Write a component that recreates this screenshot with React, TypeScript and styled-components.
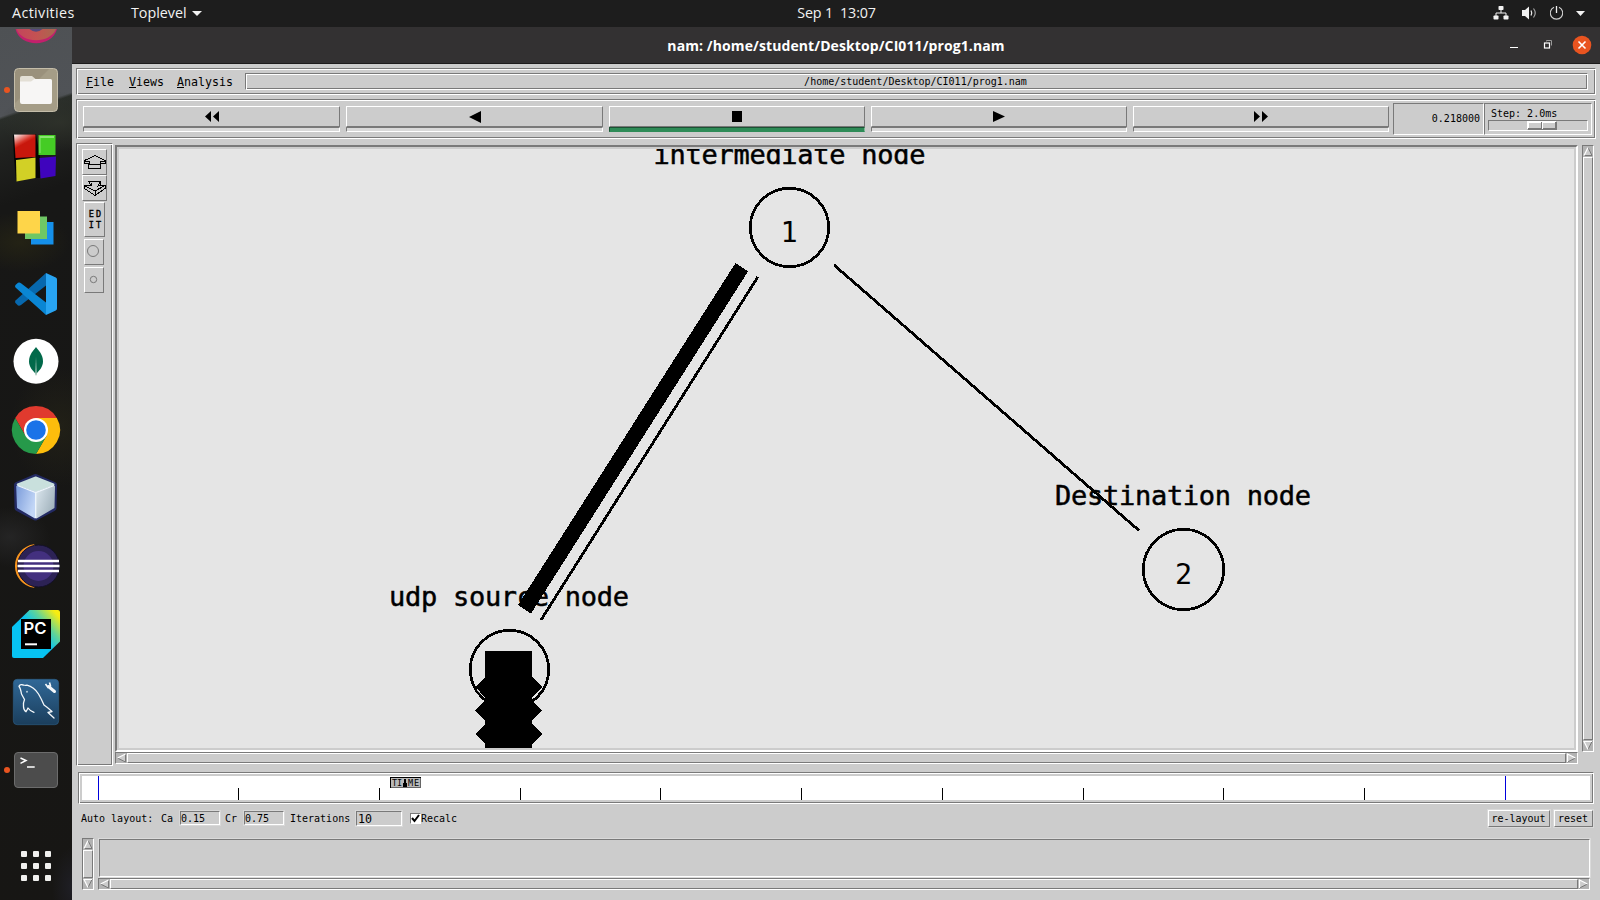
import React from "react";
import styled, { createGlobalStyle, css } from "styled-components";

const GRAY = "#797979";
const FACE = "#cccccc";
const MONO = `"DejaVu Sans Mono", "Liberation Mono", monospace`;
const SANS = `"Open Sans", "Noto Sans", sans-serif`;

const Global = createGlobalStyle`
  *, *::before, *::after { box-sizing: border-box; }
  body { margin: 0; background: #171614; overflow: hidden; }
  svg { display: block; }
`;

const groove = css`
  border: 1px solid;
  border-color: ${GRAY} #fff #fff ${GRAY};
  box-shadow: inset 1px 1px #fff, inset -1px -1px ${GRAY};
`;
const sunken = css`
  border: 1px solid;
  border-color: ${GRAY} #fff #fff ${GRAY};
`;
const raised = css`
  border: 1px solid;
  border-color: #fff ${GRAY} ${GRAY} #fff;
`;

const Screen = styled.div`
  width: 1600px;
  height: 900px;
  display: flex;
  flex-direction: column;
  overflow: hidden;
`;

/* ---------- desktop top bar ---------- */
const TopBar = styled.header`
  height: 27px;
  flex: none;
  background: #1d1d1d;
  color: #f2f2f2;
  font: 14.3px/26px ${SANS};
  display: grid;
  grid-template-columns: 1fr auto 1fr;
  white-space: pre;
`;
const BarLeft = styled.div`
  display: flex;
  padding-left: 12px;
`;
const BarLabel = styled.span<{ $w: number; $ls?: number }>`
  width: ${(p) => p.$w}px;
  letter-spacing: ${(p) => p.$ls ?? 0}px;
`;
const Clock = styled.div`
  padding-left: 73px;
  letter-spacing: -0.15px;
`;
const BarRight = styled.div`
  display: flex;
  justify-content: flex-end;
  align-items: center;
  gap: 13px;
  padding: 0 15px 1px 0;
`;
const CaretSlot = styled.span`
  display: flex;
  align-items: center;
`;

const Body = styled.div`
  flex: 1;
  display: flex;
  min-height: 0;
`;

/* ---------- dock ---------- */
const Dock = styled.nav`
  width: 72px;
  flex: none;
  display: flex;
  flex-direction: column;
  background:
    radial-gradient(60px 30px at 60px 95px, rgba(48, 52, 44, 0.8), transparent),
    radial-gradient(50px 60px at 60px 400px, rgba(40, 38, 24, 0.6), transparent),
    radial-gradient(50px 30px at 20px 215px, rgba(44, 42, 20, 0.6), transparent),
    radial-gradient(40px 30px at 10px 510px, rgba(50, 50, 52, 0.5), transparent),
    radial-gradient(20px 40px at 72px 860px, rgba(34, 34, 44, 0.7), transparent),
    linear-gradient(161deg, #4e5154 0, #505357 85px, #2a2e2a 88px, #20211f 120px, #171716 170px, #171614 100%);
`;
const DockHead = styled.div`
  height: 29px;
`;
const DockSlot = styled.div`
  height: 68px;
`;
const AppsSlot = styled.div`
  height: 96px;
  padding: 47px 0 0 21px;
`;

/* ---------- window ---------- */
const Window = styled.main`
  flex: 1;
  display: flex;
  flex-direction: column;
  background: ${FACE};
  color: #000;
  font: 10px/12px ${MONO};
  white-space: pre;
`;
const TitleBar = styled.div`
  height: 37px;
  flex: none;
  background: #333132;
  border-bottom: 1px solid #1c1b1b;
  display: grid;
  grid-template-columns: 1fr auto 1fr;
  color: #fff;
  font: bold 14px/38px ${SANS};
`;
const Title = styled.div`
  height: 36px;
  letter-spacing: 0.1px;
`;
const WinButtons = styled.div`
  display: flex;
  justify-content: flex-end;
  align-items: center;
  height: 36px;
  padding-right: 8px;
`;
const MenuBar = styled.div`
  ${groove}
  height: 27px;
  margin: 4px 4px 0;
  padding: 4px 7px 4px 9px;
  display: flex;
`;
const MenuItem = styled.span<{ $w: number }>`
  width: ${(p) => p.$w}px;
  font-size: 11.63px;
  line-height: 19px;
`;
const PathField = styled.div`
  ${groove}
  flex: 1;
  height: 17px;
  text-align: center;
  line-height: 16px;
  padding-right: 2px;
`;
const Transport = styled.div`
  ${groove}
  height: 40px;
  margin: 4px 4px 0;
  padding: 3px 3px 3px 6px;
  display: flex;
`;
const Keys = styled.div`
  flex: 1;
  display: flex;
  gap: 6px;
  padding: 3px 4px 0 0;
`;
const Key = styled.div<{ $w: number }>`
  width: ${(p) => p.$w}px;
`;
const KeyFace = styled.div`
  ${raised}
  height: 21px;
  display: flex;
  justify-content: center;
  padding-top: 4px;
`;
const KeyLamp = styled.div<{ $on?: boolean }>`
  height: 5px;
  border: 1px solid;
  background: ${(p) => (p.$on ? "#2e8b57" : "#d9d9d9")};
  border-color: ${(p) => (p.$on ? "#1b5334 #82b99a #2e8b57 #1b5334" : `${GRAY} #fff #fff ${GRAY}`)};
`;
const TimeBox = styled.div`
  ${sunken}
  width: 91px;
  height: 32px;
  line-height: 30px;
  text-align: right;
  padding-right: 3px;
`;
const StepBox = styled.div`
  ${sunken}
  width: 108px;
  height: 32px;
  padding: 4px 3px 0;
`;
const StepLabel = styled.div`
  padding-left: 3px;
  height: 12px;
`;
const StepTrough = styled.div`
  ${sunken}
  width: 100px;
  height: 11px;
  padding-left: 38px;
`;
const StepThumb = styled.div`
  width: 30px;
  height: 9px;
  display: flex;
  border: 1px solid;
  border-color: #fff ${GRAY} ${GRAY} #fff;
  box-shadow: inset -1px -1px ${GRAY}, inset 1px 1px #fff;
`;
const ThumbHalf = styled.span`
  flex: 1;
  & + & {
    border-left: 1px solid #fff;
    box-shadow: -1px 0 ${GRAY};
  }
`;

const Workspace = styled.div`
  display: flex;
  height: 623px;
  margin: 4px 6px 0 4px;
`;
const Toolbox = styled.div`
  ${groove}
  width: 37px;
  padding: 5px 0 0 5px;
`;
const Tool = styled.div<{ $w: number; $h: number; $ml?: number; $mt?: number }>`
  ${raised}
  width: ${(p) => p.$w}px;
  height: ${(p) => p.$h}px;
  margin: ${(p) => p.$mt ?? 0}px 0 0 ${(p) => p.$ml ?? 0}px;
  display: flex;
  align-items: center;
  justify-content: center;
`;
const ToolText = styled.span`
  font: 8.5px/11px ${MONO};
  letter-spacing: 2.1px;
  -webkit-text-stroke: 0.35px #000;
  padding-left: 3px;
`;
const CanvasColumn = styled.div`
  width: 1463px;
  margin: 2px 4px 0 2px;
`;
const CanvasFrame = styled.div`
  height: 607px;
  border: 2px solid;
  border-color: ${GRAY} #fff #fff ${GRAY};
  padding: 2px;
`;
const Diagram = styled.svg`
  background: #e5e5e5;
  overflow: hidden;
  text {
    font-family: ${MONO};
    white-space: pre;
  }
`;

const Bar = styled.div<{ $vertical?: boolean; $length: number; $mt?: number }>`
  ${sunken}
  background: #b3b3b3;
  display: flex;
  flex: none;
  flex-direction: ${(p) => (p.$vertical ? "column" : "row")};
  width: ${(p) => (p.$vertical ? 12 : p.$length)}px;
  height: ${(p) => (p.$vertical ? p.$length : 12)}px;
  margin-top: ${(p) => p.$mt ?? 0}px;
`;
const BarThumb = styled.div`
  ${raised}
  flex: 1;
  background: ${FACE};
`;

const Timeline = styled.div`
  ${groove}
  width: 1516px;
  height: 32px;
  margin: 6px 0 0 6px;
  padding: 3px;
`;
const Controls = styled.div`
  height: 34px;
  display: flex;
  padding: 6px 7px 0 9px;
`;
const Label = styled.span<{ $w: number }>`
  width: ${(p) => p.$w}px;
  line-height: 18px;
`;
const Entry = styled.span<{ $w: number; $mr: number; $big?: boolean }>`
  ${sunken}
  outline: 1px solid #d8d8d8;
  width: ${(p) => p.$w}px;
  height: ${(p) => (p.$big ? 15 : 14)}px;
  margin: 1px ${(p) => p.$mr}px 0 0;
  padding-left: ${(p) => (p.$big ? 1 : 0)}px;
  font-size: ${(p) => (p.$big ? 11.63 : 10)}px;
  line-height: ${(p) => (p.$big ? 14 : 13)}px;
`;
const Check = styled.span`
  width: 11px;
  height: 11px;
  margin-top: 3px;
  background: #fff;
  border: 1px solid;
  border-color: ${GRAY} #fff #fff ${GRAY};
`;
const Push = styled.button<{ $w: number }>`
  appearance: none;
  ${raised}
  border-radius: 0;
  box-shadow: 0 0 0 1px #d9d9d9;
  background: ${FACE};
  width: ${(p) => p.$w}px;
  height: 17px;
  margin: 0 0 0 4px;
  padding: 0 1px 0 0;
  font: 10px/15px ${MONO};
  color: #000;
`;
const Grow = styled.span`
  flex: 1;
`;
const Footer = styled.div`
  display: flex;
  padding-left: 10px;
`;
const LogColumn = styled.div`
  margin-left: 4px;
`;
const LogBox = styled.div`
  ${sunken}
  width: 1491px;
  height: 38px;
  margin: 1px 0 0 1px;
  outline: 1px solid #dadada;
`;

type Dir = "left" | "right" | "up" | "down";
const arrowEdges: Record<Dir, [string, string]> = {
  left: ["M9 1 L1 5", "M1 5 L9 9 L9 1"],
  right: ["M1 9 L1 1 L9 5", "M9 5 L1 9"],
  up: ["M1 9 L5 1", "M5 1 L9 9 L1 9"],
  down: ["M9 1 L1 1 L5 9", "M5 9 L9 1"],
};
const Arrow = ({ dir }: { dir: Dir }) => (
  <svg width={dir === "left" || dir === "right" ? 11 : 10} height={dir === "up" || dir === "down" ? 11 : 10} viewBox="0 0 10 10">
    <path d={`${arrowEdges[dir][0]} ${arrowEdges[dir][1].replace("M", "L")} Z`} fill={FACE} />
    <path d={arrowEdges[dir][1]} fill="none" stroke={GRAY} strokeWidth="1" />
    <path d={arrowEdges[dir][0]} fill="none" stroke="#fff" strokeWidth="1.2" />
  </svg>
);
const Scrollbar = ({ vertical, length, mt }: { vertical?: boolean; length: number; mt?: number }) => (
  <Bar $vertical={vertical} $length={length} $mt={mt}>
    <Arrow dir={vertical ? "up" : "left"} />
    <BarThumb />
    <Arrow dir={vertical ? "down" : "right"} />
  </Bar>
);

const Slot = ({ children, running }: { children: React.ReactNode; running?: boolean }) => (
  <DockSlot>
    <svg width="72" height="68" viewBox="0 0 72 68">
      {running && <circle cx="7" cy="34" r="3" fill="#e95420" />}
      {children}
    </svg>
  </DockSlot>
);

const DockIcons = () => (
  <Dock>
    <DockHead>
      <svg width="72" height="29" viewBox="0 0 72 29">
        <defs>
          <linearGradient id="ring" x1="0" y1="0" x2="1" y2="0">
            <stop offset="0" stopColor="#c2455c" />
            <stop offset="0.5" stopColor="#c45252" />
            <stop offset="1" stopColor="#a8684e" />
          </linearGradient>
        </defs>
        <path d="M15.500 2 C20 21 52 21 57 2 Z" fill="#c2206c" />
        <path d="M16.500 2 C22 17 50 17 56 2 Z" fill="url(#ring)" />
        <path d="M29.500 2 Q36 7.500 42.500 2 Z" fill="#56497c" />
      </svg>
    </DockHead>
    <Slot running>
      <defs>
        <linearGradient id="files" x1="0" y1="0" x2="1" y2="1">
          <stop offset="0.4" stopColor="#9a917c" />
          <stop offset="0.42" stopColor="#a59d87" />
        </linearGradient>
      </defs>
      <rect x="14.500" y="12.500" width="43" height="43" rx="4" fill="url(#files)" stroke="#c4bda9" />
      <path d="M20 23 V22 Q20 20 22 20 H32 L35.500 23 H50 Q52 23 52 25 V30 H20 Z" fill="#e3dfd5" />
      <path d="M20 25.500 H31 L34.500 23 H50 Q52 23 52 25 V46 Q52 48 50 48 H22 Q20 48 20 46 Z" fill="#f7f6f5" />
    </Slot>
    <Slot>
      <defs>
        <linearGradient id="red" x1="0" y1="0" x2="0.5" y2="1">
          <stop offset="0" stopColor="#fff" />
          <stop offset="0.4" stopColor="#d8362a" />
          <stop offset="0.5" stopColor="#c8170c" />
        </linearGradient>
      </defs>
      <path d="M13 12 L14 10 L36 10 L40 33 L40 54 L36 54 L16 57 L14 34 Z" fill="#050505" />
      <path d="M14 10.500 H35.500 V33 L15.500 34 Z" fill="url(#red)" />
      <path d="M38.500 11 H55.500 V31 H38.500 Z" fill="#45cc25" />
      <path d="M39.500 12 H54 V14 H40.500 V29 H39.500 Z" fill="#8ae572" />
      <path d="M16 36 L35.500 33.500 V54 L16.500 57.500 Z" fill="#d2d026" />
      <path d="M39.500 34 L56 32.500 L55.500 52 L40.500 54.500 Z" fill="#3f04bd" />
    </Slot>
    <Slot>
      <rect x="31" y="30" width="22.500" height="22.500" fill="#1590ea" />
      <rect x="25" y="24.500" width="22" height="22.500" fill="#6fc765" />
      <rect x="17.500" y="19" width="22.500" height="22.500" fill="#fed549" />
    </Slot>
    <Slot>
      <path d="M46 13 L15.500 40.500 Q14.500 42 15.500 43 L18 45.500 Q19.500 46 21 45 L46 25.500 Z" fill="#0768ae" />
      <path d="M46 55 L15.500 27.500 Q14.500 26 15.500 25 L18 22.800 Q19.500 22 21 23.200 L46 42.500 Z" fill="#0a86d4" />
      <path d="M46 13 L55.800 17.500 Q57 18 57 19.500 V48.500 Q57 50 55.800 50.500 L46 55 Z" fill="#28a4f2" />
    </Slot>
    <Slot>
      <circle cx="36" cy="33.300" r="22.500" fill="#fff" />
      <path d="M36 19 C38 22 43 26 43 33.500 C43 39 39 43 36.500 45.500 L36 47.500 L35.500 45.500 C33 43 29 39 29 33.500 C29 26 34 22 36 19 Z" fill="#01694a" />
      <path d="M36 29 L36.700 46 L36 48 L35.300 46 Z" fill="#b7cfc4" />
    </Slot>
    <Slot>
      <path d="M15.200 22 A24 24 0 0 1 56.800 22 L36 22 L25.600 40 Z" fill="#e03a2e" />
      <path d="M56.800 22 A24 24 0 0 1 36 58 L46.400 40 L36 22 Z" fill="#fdbd0c" />
      <path d="M36 58 A24 24 0 0 1 15.200 22 L25.600 40 L46.400 40 Z" fill="#26994a" />
      <circle cx="36" cy="34" r="12" fill="#fff" />
      <circle cx="36" cy="34" r="9.800" fill="#1a73e8" />
    </Slot>
    <Slot>
      <defs>
        <linearGradient id="cubeL" x1="0" y1="0" x2="1" y2="0.5">
          <stop offset="0" stopColor="#7f9fdc" />
          <stop offset="1" stopColor="#c2d6f6" />
        </linearGradient>
        <linearGradient id="cubeR" x1="0" y1="0" x2="1" y2="0.6">
          <stop offset="0" stopColor="#dbe6ee" />
          <stop offset="1" stopColor="#a3b4be" />
        </linearGradient>
      </defs>
      <path d="M35.500 13 L54 21 L53.500 44 L35.500 53.500 L17.500 44 L17 21 Z" fill="#232a63" stroke="#232a63" strokeWidth="6" strokeLinejoin="round" />
      <g strokeLinejoin="round" strokeWidth="2">
        <path d="M35.700 13.500 L53.500 20.500 L35.700 27 L17.700 20.500 Z" fill="#c9e0dd" stroke="#c9e0dd" />
        <path d="M17.200 22.500 L35 28.500 V53.500 L18 43.500 Z" fill="url(#cubeL)" stroke="url(#cubeL)" />
        <path d="M54 22.500 L36.500 28.500 V53.500 L53.500 43.500 Z" fill="url(#cubeR)" stroke="url(#cubeR)" />
      </g>
      <path d="M17.500 21.500 L35.700 28.500 L54 21.500 M35.700 28.500 V54" fill="none" stroke="#eef5fb" strokeWidth="1.300" />
    </Slot>
    <Slot>
      <path d="M34 12.200 A22 22 0 0 0 34 55.800 L38 50 V18 Z" fill="#f7941e" />
      <circle cx="38.500" cy="34" r="21" fill="#2c2255" stroke="#131029" strokeWidth="1" />
      <circle cx="38.500" cy="34" r="15" fill="#43307f" />
      <path d="M18 29 H59 M17.500 34 H59.500 M18 39 H59" stroke="#fff" strokeWidth="2.400" />
    </Slot>
    <Slot>
      <defs>
        <linearGradient id="pc" gradientUnits="userSpaceOnUse" x1="26" y1="40" x2="58" y2="12">
          <stop offset="0.300" stopColor="#07c3f2" />
          <stop offset="0.600" stopColor="#5fd39a" />
          <stop offset="0.950" stopColor="#f8ed11" />
        </linearGradient>
      </defs>
      <path d="M29.500 10 H58 Q60 10 60 12 V41.500 L43 58 H14 Q12 58 12 56 V27 Z" fill="url(#pc)" />
      <rect x="21" y="19" width="30" height="30" fill="#000" />
      <text x="23.500" y="34" fontFamily="Inter, sans-serif" fontWeight="600" fontSize="16" fill="#fff" textLength="23" lengthAdjust="spacingAndGlyphs">PC</text>
      <rect x="25" y="43.300" width="12" height="2" fill="#fff" />
    </Slot>
    <Slot>
      <defs>
        <linearGradient id="sql" x1="0" y1="0" x2="0" y2="1">
          <stop offset="0" stopColor="#306897" />
          <stop offset="1" stopColor="#1b3e5c" />
        </linearGradient>
      </defs>
      <rect x="13.300" y="11.300" width="45.400" height="45.400" rx="4" fill="url(#sql)" stroke="#2e5f88" strokeWidth="0.600" />
      <g fill="none" stroke="#f4f8fb" strokeWidth="1.300" strokeLinejoin="round" strokeLinecap="round">
        <path d="M26 43.700 Q23.500 42 23.500 38.500 Q23 35 24.500 31.500 L21.500 26 Q20.500 20 19 18.500 Q19.500 16 23.300 17 Q25 17.500 27 17.200 Q34 19 38.500 26 Q41.500 31 44 37 Q47 39 52 43.500 L48 44.500 L54 50 M26 43.700 Q27 42 28 40 Q30 43 34 44.300" />
        <path d="M27 23.500 v0.500" />
      </g>
      <path d="M48.500 18.500 L54.500 23.500" stroke="#f4f8fb" strokeWidth="3" strokeLinecap="round" />
      <path d="M45.500 16 L48 19.500 L50.500 18 L49.500 14.500" stroke="#f4f8fb" strokeWidth="1.600" fill="none" />
    </Slot>
    <Slot running>
      <rect x="14.500" y="16.500" width="43" height="35" rx="3.500" fill="#4c4c4c" stroke="#6c6c6c" />
      <path d="M20.500 22 L26 24.500 L20.500 27.300 M27 31 H34.700" fill="none" stroke="#fff" strokeWidth="1.500" />
    </Slot>
    <AppsSlot>
      <svg width="30" height="30" viewBox="0 0 30 30">
        {[0, 12, 24].flatMap((y) =>
          [0, 12, 24].map((x) => <rect key={`${x}-${y}`} x={x} y={y} width="6" height="6" rx="1" fill="#f0f0ee" />)
        )}
      </svg>
    </AppsSlot>
  </Dock>
);

const keys: { d: string; w: number; keyWidth: number; on?: boolean }[] = [
  { d: "M6 0 V11 L0 5.500 Z M14 0 V11 L8 5.500 Z", w: 14, keyWidth: 257 },
  { d: "M12 0 V12 L0 6 Z", w: 12, keyWidth: 257 },
  { d: "M0 0 H10 V11 H0 Z", w: 10, keyWidth: 256, on: true },
  { d: "M0 0 V11 L12 5.500 Z", w: 12, keyWidth: 256 },
  { d: "M0 0 V11 L6 5.500 Z M8 0 V11 L14 5.500 Z", w: 14, keyWidth: 256 },
];

const ticks = [238, 379, 520, 660, 801, 942, 1083, 1223, 1364];

const App = () => (
  <Screen>
    <Global />
    <TopBar>
      <BarLeft>
        <BarLabel $w={119} $ls={0.38}>Activities</BarLabel>
        <BarLabel $w={61}>Toplevel</BarLabel>
        <CaretSlot>
          <svg width="10" height="5" viewBox="0 0 10 5"><path d="M0 0 H10 L5 5 Z" fill="#f2f2f2" /></svg>
        </CaretSlot>
      </BarLeft>
      <Clock>Sep 1  13:07</Clock>
      <BarRight>
        <svg width="16" height="14" viewBox="0 0 16 14">
          <path d="M8 3 V7 M3 10 V7 H13 V10" fill="none" stroke="#f2f2f2" strokeWidth="1" />
          <rect x="5.500" y="0" width="5" height="4" rx="0.800" fill="#f2f2f2" />
          <rect x="0.500" y="9.500" width="5" height="4" rx="0.800" fill="#f2f2f2" />
          <rect x="10.500" y="9.500" width="5" height="4" rx="0.800" fill="#f2f2f2" />
        </svg>
        <svg width="15" height="14" viewBox="0 0 15 14">
          <path d="M0 4 H3 L7 0.500 V13.500 L3 10 H0 Z" fill="#f2f2f2" />
          <path d="M9 4.500 Q10.500 7 9 9.500" fill="none" stroke="#f2f2f2" strokeWidth="1.200" />
          <path d="M11.500 2.500 Q15 7 11.500 11.500" fill="none" stroke="#a5a5a5" strokeWidth="1.200" />
        </svg>
        <svg width="13" height="14" viewBox="0.500 0 13 14">
          <path d="M4.500 1.300 A6.200 6.200 0 1 0 9.500 1.300" fill="none" stroke="#cfcfcf" strokeWidth="1.200" />
          <path d="M7 0 V7" stroke="#f2f2f2" strokeWidth="1.300" />
        </svg>
        <svg width="9" height="5" viewBox="0 0 9 5"><path d="M0 0 H9 L4.500 5 Z" fill="#f2f2f2" /></svg>
      </BarRight>
    </TopBar>
    <Body>
      <DockIcons />
      <Window>
        <TitleBar>
          <span />
          <Title>nam: /home/student/Desktop/CI011/prog1.nam</Title>
          <WinButtons>
            <svg width="82" height="20" viewBox="0 0 82 20">
              <path d="M0 12.500 H8" stroke="#fff" />
              <path d="M36.500 6.500 V5.500 H41.500 V10.500" fill="none" stroke="#9b9a9a" />
              <rect x="34.500" y="8" width="5" height="5" fill="none" stroke="#fff" strokeWidth="1.200" />
              <circle cx="72" cy="10" r="9.300" fill="#e95420" />
              <path d="M68.500 6.500 L75.500 13.500 M75.500 6.500 L68.500 13.500" stroke="#fff" strokeWidth="1.600" />
            </svg>
          </WinButtons>
        </TitleBar>
        <MenuBar>
          <MenuItem $w={43}><u>F</u>ile</MenuItem>
          <MenuItem $w={48}><u>V</u>iews</MenuItem>
          <MenuItem $w={68}><u>A</u>nalysis</MenuItem>
          <PathField>/home/student/Desktop/CI011/prog1.nam</PathField>
        </MenuBar>
        <Transport>
          <Keys>
            {keys.map((k, i) => (
              <Key key={i} $w={k.keyWidth}>
                <KeyFace>
                  <svg width={k.w} height="12" viewBox={`0 0 ${k.w} 12`}><path d={k.d} /></svg>
                </KeyFace>
                <KeyLamp $on={k.on} />
              </Key>
            ))}
          </Keys>
          <TimeBox>0.218000</TimeBox>
          <StepBox>
            <StepLabel>Step: 2.0ms</StepLabel>
            <StepTrough>
              <StepThumb><ThumbHalf /><ThumbHalf /></StepThumb>
            </StepTrough>
          </StepBox>
        </Transport>
        <Workspace>
          <Toolbox>
            <Tool $w={25} $h={26}>
              <svg width="22" height="14" viewBox="0 0 22 14" fill="none" stroke="#000" shapeRendering="crispEdges">
                <path d="M11 0.500 L21 5.500 V8.500 H16.500 V13.500 H4.500 V8.500 H0.500 V5.500 Z M4.500 9.500 H17 M0.500 6.500 H5.500 M16.500 6.500 H21 M5.500 6 V9 M16.500 6 V9" />
              </svg>
            </Tool>
            <Tool $w={25} $h={26}>
              <svg width="22" height="15" viewBox="0 0 22 15" fill="none" stroke="#000" shapeRendering="crispEdges">
                <path d="M4.500 0.500 H16.500 V4.500 H21 V7.500 L11 14.500 L0.500 7.500 V4.500 H7 L4.500 0.500 M16.500 0.500 L14 5 L21 4.500 M0.500 4.500 L11 10 L21 4.500 M11 10 V14 M7 4.500 V2" />
              </svg>
            </Tool>
            <Tool $w={21} $h={35} $ml={2} $mt={1}><ToolText>{"ED\nIT"}</ToolText></Tool>
            <Tool $w={20} $h={26} $ml={2} $mt={2}>
              <svg width="18" height="18" viewBox="0 0 18 18"><circle cx="8" cy="8" r="5.500" fill="none" stroke={GRAY} /></svg>
            </Tool>
            <Tool $w={20} $h={26} $ml={2} $mt={2}>
              <svg width="18" height="18" viewBox="0 0 18 18"><circle cx="8.500" cy="8.500" r="3.200" fill="none" stroke={GRAY} /></svg>
            </Tool>
          </Toolbox>
          <CanvasColumn>
            <CanvasFrame>
              <Diagram width="1455" height="599" viewBox="119 149 1455 599">
                <g fontSize="27" stroke="#000" strokeWidth="0.500">
                  <text x="653.500" y="164" textLength="272">intermediate node</text>
                  <text x="1055" y="505" textLength="256">Destination node</text>
                  <text x="389" y="605.500" textLength="240">udp source node</text>
                </g>
                <g fontSize="28.500">
                  <text x="780.500" y="242">1</text>
                  <text x="1175" y="584">2</text>
                </g>
                <g fill="none" stroke="#000" strokeWidth="2.800" shapeRendering="crispEdges">
                  <circle cx="789.500" cy="227.500" r="39.200" />
                  <circle cx="1183.500" cy="569.500" r="40.200" />
                  <circle cx="509.500" cy="669.500" r="39.200" />
                  <path d="M757.800 277 L541 620" />
                  <path d="M834 265 L1139 530.500" />
                </g>
                <g shapeRendering="crispEdges">
                  <path d="M735.500 263 L748 271.500 L531 613.500 L518 605 Z" />
                  <path d="M485 651 H532 V677 L542.300 687 L532 697.500 V700 L542.300 710.500 L532 720.500 V724 L542.300 734 L532 744 V748 H485 V744 L475.500 734 L485 724 V720.500 L475.500 710.500 L485 700 V697.500 L475.500 687 L485 677 Z" />
                </g>
                <path d="M477 690 L485 698 M540.500 690 L532 698" stroke="#e5e5e5" strokeWidth="0.800" />
              </Diagram>
            </CanvasFrame>
            <Scrollbar length={1463} />
          </CanvasColumn>
          <Scrollbar vertical length={607} mt={2} />
        </Workspace>
        <Timeline>
          <svg width="1508" height="24" viewBox="82 776 1508 24" shapeRendering="crispEdges">
            <rect x="82" y="776" width="1508" height="24" fill="#fff" />
            <path d="M98.500 776 V800 M1505.500 776 V800" stroke="#0000dd" />
            {ticks.map((x) => (
              <path key={x} d={`M${x + 0.5} 788 V800`} stroke="#000" />
            ))}
            <rect x="390.500" y="777.500" width="30" height="10" fill="#b8b8b8" stroke="#000" />
            <path d="M420.500 778 V788 M391 787.500 H421" stroke="#666" />
            <g fontFamily="DejaVu Sans Mono, monospace" fontSize="8.500">
              <text x="392" y="786" textLength="10">TI</text>
              <text x="408" y="786" textLength="11">ME</text>
            </g>
            <path d="M404 779 V782 L402.500 784 V787 H407 V784 L405.500 782 V779 Z" />
          </svg>
        </Timeline>
        <Controls>
          <Label $w={80}>Auto layout:</Label>
          <Label $w={19}>Ca</Label>
          <Entry $w={40} $mr={5}>0.15</Entry>
          <Label $w={19}>Cr</Label>
          <Entry $w={40} $mr={6}>0.75</Entry>
          <Label $w={66}>Iterations</Label>
          <Entry $w={46} $mr={8} $big>10</Entry>
          <Check>
            <svg width="9" height="9" viewBox="0 0 9 9"><path d="M1 4 L3.500 7 L8 1" fill="none" stroke="#000" strokeWidth="2" /></svg>
          </Check>
          <Label $w={40}>Recalc</Label>
          <Grow />
          <Push $w={62}>re-layout</Push>
          <Push $w={39}>reset</Push>
        </Controls>
        <Footer>
          <Scrollbar vertical length={52} />
          <LogColumn>
            <LogBox />
            <Scrollbar length={1492} mt={1} />
          </LogColumn>
        </Footer>
      </Window>
    </Body>
  </Screen>
);

export default App;
